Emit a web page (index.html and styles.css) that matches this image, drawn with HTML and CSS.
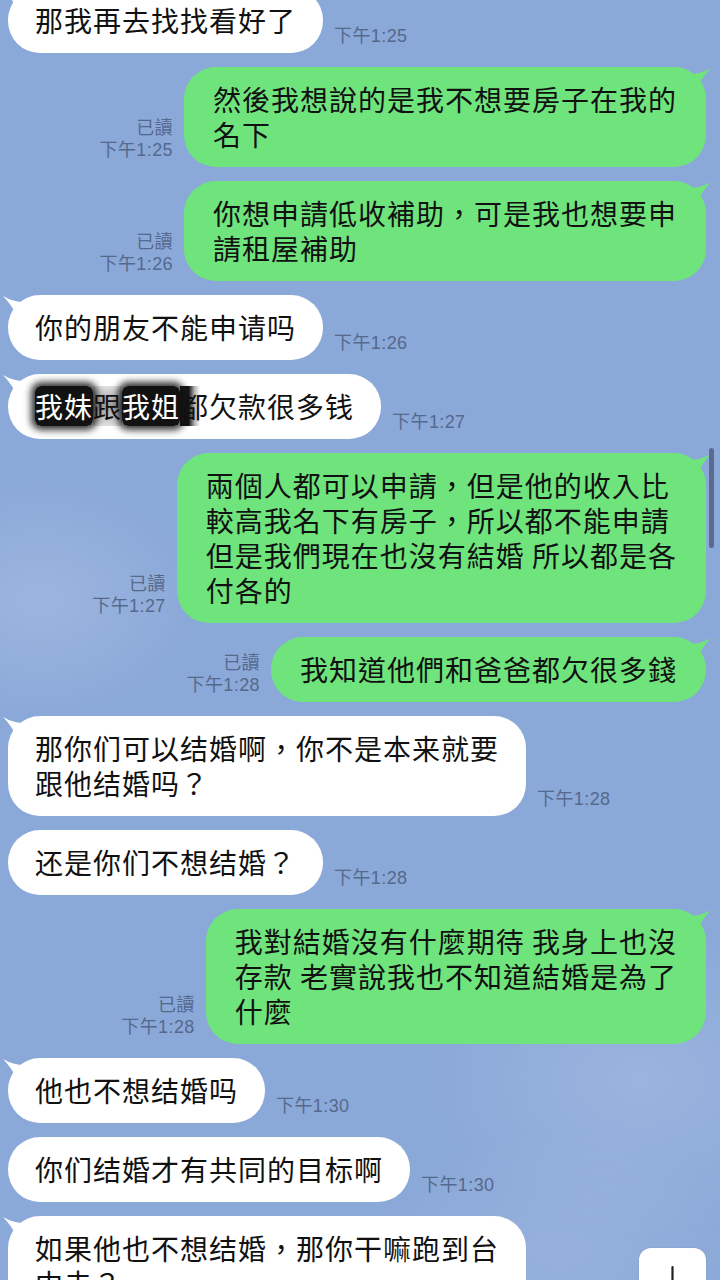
FILE: index.html
```html
<!DOCTYPE html>
<html lang="zh-Hant">
<head>
<meta charset="utf-8" />
<meta name="viewport" content="width=device-width, initial-scale=1" />
<title>Chat</title>
<link rel="stylesheet" href="styles.css">
</head>
<body>
<!-- ********************* Chat begin *********************** -->
<div class="chat">

 <div class="row in">
  <div class="bubble tail">那我再去找找看好了</div>
  <div class="meta"><span>下午1:25</span></div>
 </div>

 <div class="row out">
  <div class="meta"><span>已讀</span><span>下午1:25</span></div>
  <div class="bubble tail">然後我想說的是我不想要房子在我的<br>名下</div>
 </div>

 <div class="row out">
  <div class="meta"><span>已讀</span><span>下午1:26</span></div>
  <div class="bubble tail">你想申請低收補助，可是我也想要申<br>請租屋補助</div>
 </div>

 <div class="row in">
  <div class="bubble tail">你的朋友不能申请吗</div>
  <div class="meta"><span>下午1:26</span></div>
 </div>

 <div class="row in">
  <div class="bubble tail"><span class="redact">我妹</span><span class="smudge">跟</span><span class="redact">我姐</span><span class="smudge half">都</span>欠款很多钱</div>
  <div class="meta"><span>下午1:27</span></div>
 </div>

 <div class="row out">
  <div class="meta"><span>已讀</span><span>下午1:27</span></div>
  <div class="bubble tail">兩個人都可以申請，但是他的收入比<br>較高我名下有房子，所以都不能申請<br>但是我們現在也沒有結婚 所以都是各<br>付各的</div>
 </div>

 <div class="row out">
  <div class="meta"><span>已讀</span><span>下午1:28</span></div>
  <div class="bubble tail">我知道他們和爸爸都欠很多錢</div>
 </div>

 <div class="row in">
  <div class="bubble tail">那你们可以结婚啊，你不是本来就要<br>跟他结婚吗？</div>
  <div class="meta"><span>下午1:28</span></div>
 </div>

 <div class="row in">
  <div class="bubble">还是你们不想结婚？</div>
  <div class="meta"><span>下午1:28</span></div>
 </div>

 <div class="row out">
  <div class="meta"><span>已讀</span><span>下午1:28</span></div>
  <div class="bubble tail">我對結婚沒有什麼期待 我身上也沒<br>存款 老實說我也不知道結婚是為了<br>什麼</div>
 </div>

 <div class="row in">
  <div class="bubble tail">他也不想结婚吗</div>
  <div class="meta"><span>下午1:30</span></div>
 </div>

 <div class="row in">
  <div class="bubble">你们结婚才有共同的目标啊</div>
  <div class="meta"><span>下午1:30</span></div>
 </div>

 <div class="row in">
  <div class="bubble tail">如果他也不想结婚，那你干嘛跑到台<br>中去？</div>
 </div>

</div>

<!-- scroll indicator + jump button sit over the chat -->
<div class="scrollbar"></div>
<div class="jump">
 <svg width="67" height="60" viewBox="0 0 67 60"><path d="M33.5 19 V52 M24 43 L33.5 52 L43 43" fill="none" stroke="#222" stroke-width="2.2" stroke-linecap="round" stroke-linejoin="round"/></svg>
</div>
<!-- ********************* Chat end *********************** -->
</body>
</html>
```

FILE: styles.css
```css
html, body {
margin:0; padding:0; width:720px; height:1280px; overflow:hidden;
}
body {
position:relative;
background-color:#8aa8d8;
background-image:
 radial-gradient(ellipse 160px 120px at 40px 600px, rgba(255,255,255,.16), rgba(255,255,255,0)),
 radial-gradient(ellipse 220px 160px at 640px 1080px, rgba(255,255,255,.14), rgba(255,255,255,0)),
 radial-gradient(ellipse 200px 120px at 560px 1250px, rgba(255,255,255,.10), rgba(255,255,255,0));
font-family:"Noto Sans CJK TC", sans-serif; color:#111;
}
.chat {
display:flex; flex-direction:column; gap:14px;
margin-top:-12px; padding:0 14px 0 8px;
}
.row {
display:flex; align-items:flex-end; gap:11px;
}
.row.out { justify-content:flex-end; }

.bubble {
position:relative;
border-radius:32px; padding:15px 27px;
font-size:28px; line-height:35px; letter-spacing:1px;
white-space:nowrap;
}
.in .bubble {
background:#fff; font-family:"Noto Sans CJK SC", sans-serif;
}
.out .bubble {
background:#6fe47c; padding:15px 29px 15px 29px;
}
.bubble.tail::before {
content:""; position:absolute; top:1px; width:22px; height:20px;
}
.in .bubble.tail::before {
left:-5px; background:#fff;
clip-path:path('M0 0 Q10 6 22 6 L14 20 Q8 8 0 0 Z');
}
.out .bubble.tail::before {
right:-5px; background:#6fe47c;
clip-path:path('M22 0 Q12 6 0 6 L8 20 Q14 8 22 0 Z');
}

.meta {
display:flex; flex-direction:column; margin-bottom:6px;
font-family:"Liberation Sans", "Noto Sans CJK TC", sans-serif;
font-size:18px; line-height:22px; letter-spacing:.4px; color:#55698c;
}
.out .meta { align-items:flex-end; }

/* names scribbled out, labels written on top */
.redact {
position:relative; z-index:1;
background:#121212; color:#fff; border-radius:6px;
box-shadow:0 0 7px 4px rgba(18,18,18,.85);
}
.smudge {
background:linear-gradient(to bottom, rgba(0,0,0,.12), rgba(0,0,0,.38) 50%, rgba(0,0,0,.12));
}
.smudge.half {
background:linear-gradient(to right, #151515 30%, rgba(0,0,0,.3) 50%, rgba(0,0,0,0) 70%);
}

.scrollbar {
position:absolute; right:6px; top:448px;
width:5px; height:100px; border-radius:3px; background:#5c6a90;
}
.jump {
position:absolute; left:639px; top:1248px;
width:67px; height:60px; border-radius:12px; background:#fff;
box-shadow:0 0 2px rgba(0,0,0,.12);
}
.jump svg { display:block; }
```
